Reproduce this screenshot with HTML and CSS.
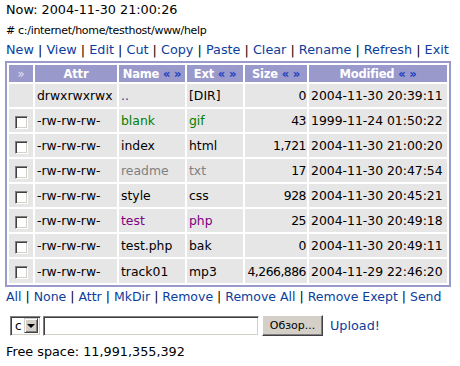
FILE: index.html
```html
<!DOCTYPE html>
<html lang="en">
<head>
    <meta charset="UTF-8">
    <title>File manager</title>
    <link rel="stylesheet" href="styles.css">
</head>
<body>
<div class="page">
    <div class="now">Now: 2004-11-30 21:00:26</div>
    <div class="path"># c:/internet/home/testhost/www/help</div>
    <div class="menu">
        <a href="#">New</a> | <a href="#">View</a> | <a href="#">Edit</a> | <a href="#">Cut</a> | <a href="#">Copy</a> | <a href="#">Paste</a> | <a href="#">Clear</a> | <a href="#">Rename</a> | <a href="#">Refresh</a> | <a href="#">Exit</a>
    </div>

    <table class="files">
        <tr>
            <th class="c-sel">&raquo;</th>
            <th class="c-attr">Attr</th>
            <th class="c-name">Name <a href="#">&laquo;</a> <a href="#">&raquo;</a></th>
            <th class="c-ext">Ext <a href="#">&laquo;</a> <a href="#">&raquo;</a></th>
            <th class="c-size">Size <a href="#">&laquo;</a> <a href="#">&raquo;</a></th>
            <th class="c-mod">Modified <a href="#">&laquo;</a> <a href="#">&raquo;</a></th>
        </tr>
        <tr>
            <td></td>
            <td>drwxrwxrwx</td>
            <td><a href="#">..</a></td>
            <td>[DIR]</td>
            <td class="num">0</td>
            <td>2004-11-30 20:39:11</td>
        </tr>
        <tr>
            <td class="sel"><span class="check"></span></td>
            <td>-rw-rw-rw-</td>
            <td class="img">blank</td>
            <td class="img">gif</td>
            <td class="num">43</td>
            <td>1999-11-24 01:50:22</td>
        </tr>
        <tr>
            <td class="sel"><span class="check"></span></td>
            <td>-rw-rw-rw-</td>
            <td>index</td>
            <td>html</td>
            <td class="num">1,721</td>
            <td>2004-11-30 21:00:20</td>
        </tr>
        <tr>
            <td class="sel"><span class="check"></span></td>
            <td>-rw-rw-rw-</td>
            <td class="txt">readme</td>
            <td class="txt">txt</td>
            <td class="num">17</td>
            <td>2004-11-30 20:47:54</td>
        </tr>
        <tr>
            <td class="sel"><span class="check"></span></td>
            <td>-rw-rw-rw-</td>
            <td>style</td>
            <td>css</td>
            <td class="num">928</td>
            <td>2004-11-30 20:45:21</td>
        </tr>
        <tr>
            <td class="sel"><span class="check"></span></td>
            <td>-rw-rw-rw-</td>
            <td class="script">test</td>
            <td class="script">php</td>
            <td class="num">25</td>
            <td>2004-11-30 20:49:18</td>
        </tr>
        <tr>
            <td class="sel"><span class="check"></span></td>
            <td>-rw-rw-rw-</td>
            <td>test.php</td>
            <td>bak</td>
            <td class="num">0</td>
            <td>2004-11-30 20:49:11</td>
        </tr>
        <tr class="last">
            <td class="sel"><span class="check"></span></td>
            <td>-rw-rw-rw-</td>
            <td>track01</td>
            <td>mp3</td>
            <td class="num">4,266,886</td>
            <td>2004-11-29 22:46:20</td>
        </tr>
    </table>

    <div class="menu menu-bottom">
        <a href="#">All</a> | <a href="#">None</a> | <a href="#">Attr</a> | <a href="#">MkDir</a> | <a href="#">Remove</a> | <a href="#">Remove All</a> | <a href="#">Remove Exept</a> | <a href="#">Send</a>
    </div>

    <form class="upload">
        <div class="drive">
            <span class="drive-val">c</span>
            <span class="drive-btn"><span class="arrow"></span></span>
        </div>
        <input class="file-path" type="text">
        <button class="browse" type="button">Обзор...</button>
        <a class="send" href="#">Upload!</a>
    </form>

    <div class="free">Free space: 11,991,355,392</div>
</div>
</body>
</html>
```

FILE: styles.css
```css
* {
    padding: 0;
    margin: 0;
    box-sizing: border-box;
}

body {
    font-family: "DejaVu Sans", Verdana, sans-serif;
    font-size: 12.8px;
    color: #000;
    background: #fff;
}

a {
    color: #0b3d9c;
    text-decoration: none;
}

.page {
    padding: 0 6px;
}

.now,
.menu {
    height: 20px;
    line-height: 20px;
    white-space: nowrap;
}

.menu-bottom {
    font-size: 12.5px;
}

.path {
    height: 20px;
    line-height: 21px;
    font-size: 11px;
    letter-spacing: -0.3px;
}

/* table of files */
.files {
    margin: 1px 0 0 -1px;
    border: 2px solid #9999cc;
    border-spacing: 2px;
    font-size: 12.4px;
    table-layout: fixed;
    width: 446px;
}

.files th {
    height: 17px;
    background: #9999cc;
    color: #fff;
    font-size: 11.5px;
    font-weight: bold;
    letter-spacing: -0.2px;
    text-align: center;
    white-space: nowrap;
    overflow: hidden;
}

.files th a {
    color: #1a3fc0;
}

.files td {
    height: 23px;
    padding: 0 2px;
    background: #e6e6e6;
    white-space: nowrap;
}

.files .last td {
    height: 24px;
}

.files th.c-sel {
    width: 24px;
    color: #e4e4f4;
    font-weight: normal;
}
.c-attr { width: 82px; }
.c-name { width: 66px; }
.c-ext { width: 56px; }
.c-size { width: 62px; }
.c-mod { width: 138px; }

.files td.num {
    padding: 0 1px 0 0;
    text-align: right;
    letter-spacing: -0.5px;
}

.files td.sel {
    text-align: center;
    padding: 0;
}

.img { color: #008000; }
.txt { color: #808080; }
.script { color: #800080; }

.check {
    display: inline-block;
    width: 13px;
    height: 13px;
    margin-top: 3px;
    vertical-align: middle;
    background: #fff;
    border: 1px solid;
    border-color: #808080 #fff #fff #808080;
    box-shadow: inset 1px 1px 0 #404040, inset -1px -1px 0 #d4d0c8;
}

/* upload form */
.upload {
    display: flex;
    align-items: center;
    height: 21px;
    margin: 8px 0 0 4px;
}

.drive {
    display: flex;
    align-items: center;
    justify-content: space-between;
    width: 31px;
    height: 20px;
    padding: 2px;
    background: #fff;
    border: 1px solid;
    border-color: #808080 #fff #fff #808080;
    box-shadow: inset 1px 1px 0 #404040, inset -1px -1px 0 #d4d0c8;
}

.drive-val {
    padding-left: 2px;
    font-size: 12px;
    line-height: 14px;
}

.drive-btn {
    display: flex;
    align-items: center;
    justify-content: center;
    width: 14px;
    height: 15px;
    background: #d4d0c8;
    border: 1px solid;
    border-color: #d4d0c8 #404040 #404040 #d4d0c8;
    box-shadow: inset 1px 1px 0 #fff, inset -1px -1px 0 #808080;
}

.arrow {
    width: 0;
    height: 0;
    border-left: 4px solid transparent;
    border-right: 4px solid transparent;
    border-top: 4px solid #000;
}

.file-path {
    width: 216px;
    height: 20px;
    margin-left: 2px;
    background: #fff;
    border: 1px solid;
    border-color: #808080 #fff #fff #808080;
    box-shadow: inset 1px 1px 0 #404040, inset -1px -1px 0 #d4d0c8;
    outline: none;
}

.browse {
    width: 61px;
    height: 21px;
    margin-left: 3px;
    background: #d4d0c8;
    border: 1px solid;
    border-color: #fff #404040 #404040 #fff;
    box-shadow: inset -1px -1px 0 #808080;
    font-family: "DejaVu Sans", Verdana, sans-serif;
    font-size: 11px;
    color: #000;
}

.send {
    margin-left: 7px;
    font-size: 12.8px;
}

.free {
    height: 20px;
    line-height: 20px;
    margin-top: 6px;
}
```
